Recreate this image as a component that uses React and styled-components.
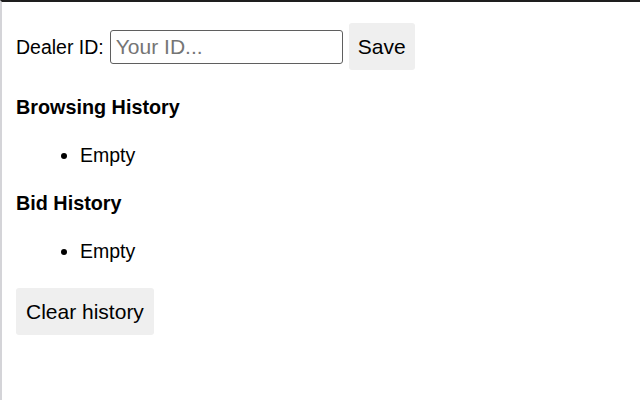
import React from "react";
import styled, { createGlobalStyle } from "styled-components";

const Global = createGlobalStyle`
  html, body { margin: 0; padding: 0; background: #ffffff; }
  body { font-family: "Liberation Sans", Arial, Helvetica, sans-serif; color: #000; }
`;

const Frame = styled.div`
  box-sizing: border-box;
  width: 640px;
  height: 400px;
  border-top: 2px solid #1e1e1e;
  border-left: 2px solid #d4d4d8;
  padding: 21px 0 0 14px;
  display: flex;
  flex-direction: column;
  align-items: flex-start;
  gap: 26px;
  font-size: 19.5px;
`;

const IdRow = styled.div`
  display: flex;
  align-items: center;
  gap: 6px;
`;

const Label = styled.label`
  font-size: 19.5px;
  line-height: 22px;
`;

const IdInput = styled.input`
  box-sizing: border-box;
  width: 233px;
  height: 34px;
  padding: 0 5px;
  border: 1px solid #5f5f5f;
  border-radius: 3px;
  font-family: inherit;
  font-size: 21px;
  color: #000;
  outline: none;
  &::placeholder { color: #757575; }
`;

const Button = styled.button`
  box-sizing: border-box;
  height: 47px;
  padding: 0 ${(p) => (p.$tight ? 9 : 10)}px;
  border: none;
  border-radius: 3px;
  background: #efefef;
  font-family: inherit;
  font-size: 21px;
  color: #000;
  cursor: pointer;
`;

const Heading = styled.h3`
  margin: 0;
  font-size: 19.8px;
  line-height: 22px;
  font-weight: bold;
`;

const List = styled.ul`
  margin: 0;
  padding-left: 64px;
  list-style: disc;
`;

const Item = styled.li`
  font-size: 19.5px;
  line-height: 22px;
`;

function Section({ title, items }) {
  return (
    <>
      <Heading>{title}</Heading>
      <List>
        {items.length === 0 ? <Item>Empty</Item> : items.map((i) => <Item key={i}>{i}</Item>)}
      </List>
    </>
  );
}

export default function App() {
  return (
    <>
      <Global />
      <Frame>
        <IdRow>
          <Label htmlFor="dealer">Dealer ID:</Label>
          <IdInput id="dealer" placeholder="Your ID..." />
          <Button $tight>Save</Button>
        </IdRow>
        <Section title="Browsing History" items={[]} />
        <Section title="Bid History" items={[]} />
        <Button>Clear history</Button>
      </Frame>
    </>
  );
}
